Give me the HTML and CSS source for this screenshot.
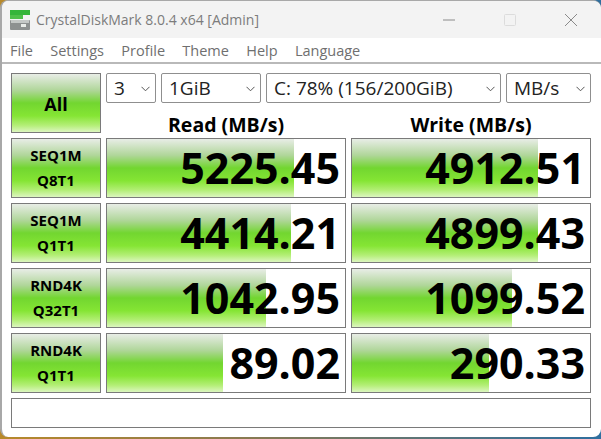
FILE: index.html
```html
<!DOCTYPE html>
<html lang="en">
<head>
<meta charset="utf-8">
<title>CrystalDiskMark</title>
<link rel="stylesheet" href="styles.css">
</head>
<body>
<div class="window">
  <header class="titlebar">
    <svg class="app-icon" width="20" height="20" viewBox="0 0 20 20">
      <rect x="0" y="0" width="20" height="5" fill="#35b53a"/>
      <rect x="0" y="5" width="13" height="4" fill="#4fc04a"/>
      <rect x="0" y="10" width="20" height="10" rx="1" fill="#8d9190"/>
      <rect x="1" y="10" width="18" height="3" fill="#c4c8c6"/>
      <rect x="11" y="14" width="5" height="3" fill="#e8ece8"/>
    </svg>
    <span class="title">CrystalDiskMark 8.0.4 x64 [Admin]</span>
    <div class="controls">
      <svg width="14" height="14" viewBox="0 0 14 14"><path d="M1 7H13" stroke="#8a8a8a" stroke-width="1"/></svg>
      <svg width="14" height="14" viewBox="0 0 14 14"><rect x="1.5" y="1.5" width="11" height="11" rx="1" fill="none" stroke="#dcdcdc"/></svg>
      <svg width="14" height="14" viewBox="0 0 14 14"><path d="M1 1L13 13M13 1L1 13" stroke="#8a8a8a" stroke-width="1"/></svg>
    </div>
  </header>
  <nav class="menubar">
    <span>File</span><span>Settings</span><span>Profile</span><span>Theme</span><span>Help</span><span>Language</span>
  </nav>
  <main class="panel">
    <button class="test test-all">All</button>
    <div class="head">
      <div class="selects">
        <div class="select s-count">3<svg class="chev" width="9" height="6" viewBox="0 0 9 6"><path d="M.5 .8L4.5 4.8L8.5 .8" fill="none" stroke="#555"/></svg></div>
        <div class="select s-size">1GiB<svg class="chev" width="9" height="6" viewBox="0 0 9 6"><path d="M.5 .8L4.5 4.8L8.5 .8" fill="none" stroke="#555"/></svg></div>
        <div class="select s-drive">C: 78% (156/200GiB)<svg class="chev" width="9" height="6" viewBox="0 0 9 6"><path d="M.5 .8L4.5 4.8L8.5 .8" fill="none" stroke="#555"/></svg></div>
        <div class="select s-unit">MB/s<svg class="chev" width="9" height="6" viewBox="0 0 9 6"><path d="M.5 .8L4.5 4.8L8.5 .8" fill="none" stroke="#555"/></svg></div>
      </div>
      <div class="cols"><b>Read (MB/s)</b><b>Write (MB/s)</b></div>
    </div>

    <button class="test">SEQ1M<br>Q8T1</button>
    <div class="cell"><i class="bar" style="width:187px"></i><span>5225.45</span></div>
    <div class="cell"><i class="bar" style="width:186px"></i><span>4912.51</span></div>

    <button class="test">SEQ1M<br>Q1T1</button>
    <div class="cell"><i class="bar" style="width:184px"></i><span>4414.21</span></div>
    <div class="cell"><i class="bar" style="width:186px"></i><span>4899.43</span></div>

    <button class="test">RND4K<br>Q32T1</button>
    <div class="cell"><i class="bar" style="width:159px"></i><span>1042.95</span></div>
    <div class="cell"><i class="bar" style="width:160px"></i><span>1099.52</span></div>

    <button class="test">RND4K<br>Q1T1</button>
    <div class="cell"><i class="bar" style="width:116px"></i><span>89.02</span></div>
    <div class="cell"><i class="bar" style="width:137px"></i><span>290.33</span></div>

    <div class="comment"></div>
  </main>
</div>
</body>
</html>
```
FILE: styles.css
```css
* { box-sizing: border-box; }
html, body { margin: 0; padding: 0; }
body { width: 601px; height: 439px; overflow: hidden; background: linear-gradient(90deg, #b8892a 0%, #8a7a50 40%, #2f6f9f 100%); }
.window {
  width: 601px; height: 437px; background: #fff;
  border: 1px solid #a8a8a8; border-left-width: 2px; border-right: 0; border-bottom: 0;
  border-radius: 8px; overflow: hidden;
  font-family: "Open Sans", "Noto Sans", sans-serif; color: #000;
}
.titlebar { height: 37px; background: #f3f3f3; display: flex; align-items: center; padding-left: 8px; }
.app-icon { flex: none; }
.title { margin-left: 6px; font-size: 14px; color: #7c7c7c; }
.controls { margin-left: auto; display: flex; gap: 47px; margin-right: 23px; align-items: center; }
.controls svg { display: block; }
.menubar { height: 26px; background: #fff; border-bottom: 2px solid #b9b9b9; display: flex; gap: 17.3px; align-items: center; padding-left: 8px; font-size: 14.5px; color: #6f6f6f; }
.panel {
  display: grid; grid-template-columns: 90px 240px 240px; grid-template-rows: 60px 60px 60px 60px 60px 30px;
  gap: 5px; padding: 9px 0 0 9px;
}
.test {
  margin: 0; padding: 0; border: 1px solid #7a7a7a; font: 700 15px/25px "Open Sans", "Noto Sans", sans-serif; color: #000;
  background: linear-gradient(#e8ede6 0%, #b0d69a 28%, #72d630 50%, #85e534 72%, #b2ee74 88%, #dcf6bf 100%);
  text-align: center;
}
.test-all { font-size: 18px; grid-row: 1; padding-top: 2px; }
.head { grid-column: 2 / 4; display: flex; flex-direction: column; }
.selects { display: flex; gap: 5px; height: 30px; }
.select { position: relative; height: 30px; border: 1px solid #8f8f8f; border-radius: 2px; background: #fff; font-size: 19px; line-height: 28px; padding-left: 7px; color: #222; }
.chev { position: absolute; right: 5px; top: 12px; }
.s-count { width: 50px; }
.s-size { width: 100px; }
.s-drive { width: 235px; }
.s-unit { width: 85px; }
.cols { display: grid; grid-template-columns: 240px 240px; gap: 5px; text-align: center; font-size: 19.5px; line-height: 28px; height: 30px; margin-top: 8px; }
.cell { position: relative; border: 1px solid #7a7a7a; background: #fff; overflow: hidden; text-align: right; }
.bar {
  position: absolute; left: 0; top: 0; bottom: 0;
  background: linear-gradient(#e8ede6 0%, #b0d69a 28%, #72d630 50%, #85e534 72%, #b2ee74 88%, #dcf6bf 100%);
}
.cell span { position: relative; display: block; padding-right: 5px; font-size: 43px; font-weight: 700; line-height: 58px; letter-spacing: 0; }
.comment { grid-column: 1 / 4; border: 1px solid #7a7a7a; background: #fff; }
```
